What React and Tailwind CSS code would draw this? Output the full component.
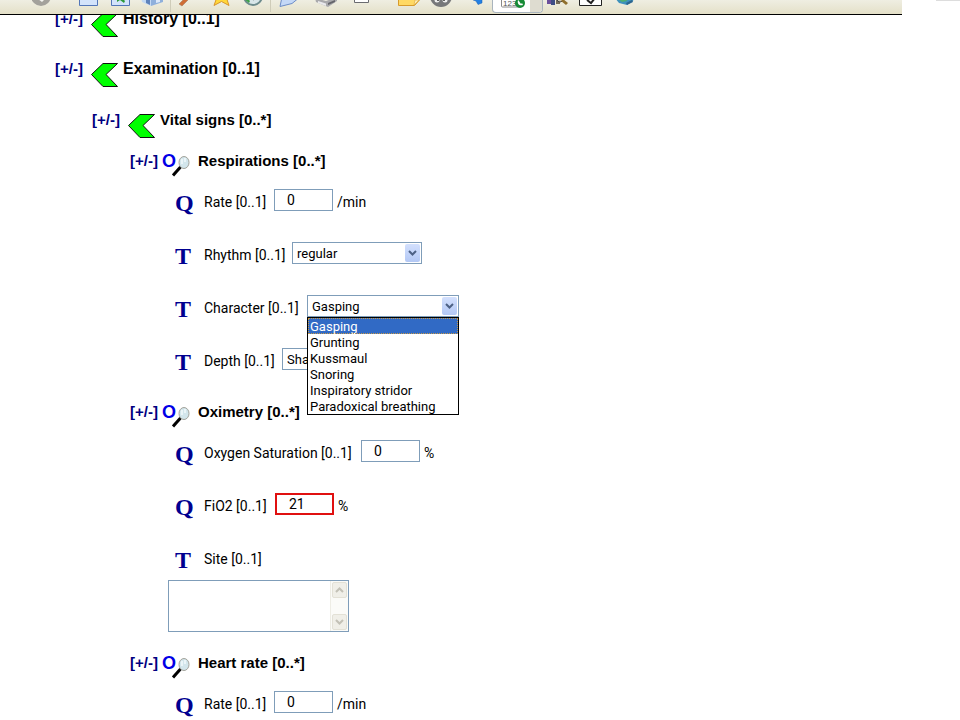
import { useState } from "react";
import clsx from "clsx";

const CHARACTERS = [
  "Gasping",
  "Grunting",
  "Kussmaul",
  "Snoring",
  "Inspiratory stridor",
  "Paradoxical breathing",
];

/* ---------- toolbar ---------- */

const TOOLS = [
  {
    name: "Stop",
    box: "ml-8 w-5",
    art: (
      <>
        <circle cx="9" cy="-4" r="10" fill="#a3a19b" />
        <path d="M6 -1h7l-3 3z" fill="#f4f4f0" />
      </>
    ),
  },
  {
    name: "Page",
    box: "ml-[27px] w-5",
    art: <path d="M.5 -4h18V5.500h-18z" fill="#d3e3fb" stroke="#5376b8" />,
  },
  {
    name: "Refresh",
    box: "ml-3 w-5",
    art: (
      <>
        <path d="M.5 -4h18V5.500h-18z" fill="#d3e3fb" stroke="#5376b8" />
        <path d="M6 -2v4l3-2 4 3 1-2-4-4z" fill="#2c9a3a" />
      </>
    ),
  },
  {
    name: "Home",
    box: "ml-2.5 w-6",
    art: (
      <>
        <path d="M0 -3l10 2v7l-9-4z" fill="#c3d9f4" />
        <path d="M10 -1l12-3v6l-12 4z" fill="#8fb0dc" />
        <path d="M5 -1l4 1v5l-4-2z" fill="#5f83bb" />
        <path d="M15 0l4-1v3l-4 1z" fill="#dce9fa" />
      </>
    ),
  },
  {
    name: "Search",
    divider: true,
    box: "ml-2 w-4",
    art: <path d="M0 4L8 -4l3 2-8 8z" fill="#cf6d35" stroke="#99745b" strokeWidth=".5" />,
  },
  {
    name: "Favorites",
    box: "ml-[18px] w-5",
    art: <path d="M4 -3L1 5.500l7.500-4 7.500 4-2-6 4-4z" fill="#ffd83a" stroke="#d9952b" />,
  },
  {
    name: "History",
    box: "ml-2 w-6",
    art: (
      <>
        <circle cx="12" cy="-4" r="9" fill="#d8e6e9" stroke="#6d8b8d" strokeWidth="2" />
        <path d="M3 -1l5 4 1-2-3-3z" fill="#3c9f47" />
        <path d="M12 -4v4l4-2" fill="none" stroke="#55646b" />
      </>
    ),
  },
  {
    name: "Mail",
    divider: true,
    box: "ml-2 w-6",
    art: <path d="M3 -3L1 6.500l12-3L21 -3z" fill="#c4d8f7" stroke="#6c8cc7" />,
  },
  {
    name: "Print",
    box: "ml-3 w-6",
    art: (
      <>
        <path d="M0 -2l11 3 11-4v4l-9 6L1 2z" fill="#a9a9ac" />
        <path d="M3 1l8 2.500V6L3 3z" fill="#e9e9ec" />
        <path d="M13 3l7-3v2l-7 3z" fill="#65656b" />
      </>
    ),
  },
  {
    name: "Edit",
    box: "ml-[15px] w-4",
    art: <path d="M.5 -4h14V2.500H.5z" fill="#fff" stroke="#6a6b70" />,
  },
  {
    name: "Notes",
    box: "ml-7 w-6",
    art: (
      <>
        <path d="M.5 -4h21V0l-5 5.500H.5z" fill="#ffd964" stroke="#d79b2c" />
        <path d="M16 5l1-5h4z" fill="#fff0b5" stroke="#d79b2c" strokeWidth=".5" />
      </>
    ),
  },
  {
    name: "Messenger",
    box: "ml-2 w-6",
    art: (
      <>
        <circle cx="11" cy="-4" r="11" fill="#77787a" />
        <circle cx="7" cy="0" r="2.500" fill="#eee" />
        <circle cx="15" cy="0" r="2.500" fill="#eee" />
        <circle cx="8" cy="0" r="1" fill="#333" />
        <circle cx="14" cy="0" r="1" fill="#333" />
      </>
    ),
  },
  {
    name: "Bluetooth",
    box: "ml-[18px] w-3",
    art: <path d="M2 -3h8v6L6 4.500 4 1 1 0z" fill="#2380e4" stroke="#165cae" strokeWidth=".5" />,
  },
];

const TOOLS_AFTER = [
  {
    name: "Research",
    box: "ml-[3px] w-6",
    art: (
      <>
        <path d="M1 -3h4v7H1z" fill="#6b4f9b" />
        <path d="M5 -3h4v8H5z" fill="#3e4d86" />
        <path d="M10 0h4v4h-4z" fill="#776d5a" />
        <circle cx="14" cy="-1" r="3" fill="#c8c3ad" stroke="#444" />
        <path d="M15 1l5 4 2-2-5-4z" fill="#8f6f2d" />
      </>
    ),
  },
  {
    name: "Check",
    box: "ml-2 w-6",
    art: (
      <>
        <path d="M1.500 -4h22v9.500H1.500z" fill="#fff" stroke="#222" />
        <path d="M9 0l4 3 4-5" fill="none" stroke="#222" strokeWidth="2" />
      </>
    ),
  },
  {
    name: "Sync",
    box: "ml-3 w-6",
    art: (
      <>
        <path d="M1 -2l4 5 8 2 6-4 1-3z" fill="#3e91bd" />
        <path d="M4 -1l4 3 5-1-1-2z" fill="#4fae72" />
        <path d="M12 3l6-3 1 2-6 3z" fill="#2c658f" />
      </>
    ),
  },
];

function Tool({ name, box, art, divider }) {
  return (
    <>
      {divider && <span className="ml-[5px] h-3 w-px shrink-0 bg-[#cfccb9]" />}
      <button type="button" aria-label={name} className={clsx("h-3 shrink-0", box)}>
        <svg viewBox="0 0 24 12" width="24" height="12">
          {art}
        </svg>
      </button>
    </>
  );
}

function Toolbar() {
  return (
    <header className="flex items-start">
      <div className="flex h-[15px] w-[94%] overflow-hidden border-b border-black bg-gradient-to-b from-[#efeee2] to-[#e4e0c8]">
        {TOOLS.map((t) => (
          <Tool key={t.name} {...t} />
        ))}
        <button
          type="button"
          aria-label="Phone numbers"
          className="ml-2 flex h-[13px] w-[51px] shrink-0 overflow-hidden rounded-b border border-t-0 border-[#a9b4bd] bg-white"
        >
          <svg viewBox="0 0 37 12" width="37" height="12">
            <rect x="8.500" y="-4" width="18" height="11" rx="1" fill="#fff" stroke="#888" />
            <text x="10" y="6" fontSize="8" fontFamily="Liberation Sans" fill="#555">
              123
            </text>
            <circle cx="27" cy="3" r="5" fill="#168a35" />
            <path d="M25 0c-1 4 1 6 5 5l-1-2-1 1-2-3z" fill="#fff" />
          </svg>
          <span className="h-full grow bg-[#dedcd0]" />
        </button>
        {TOOLS_AFTER.map((t) => (
          <Tool key={t.name} {...t} />
        ))}
      </div>
      <span className="ml-auto h-px w-6 bg-[#dddddd]" />
    </header>
  );
}

/* ---------- tree icons ---------- */

function ArrowIcon() {
  return (
    <svg className="ml-2 mt-1 shrink-0" viewBox="0 0 27 24" width="27" height="24">
      <path d="M.5 11.500L12 .5h14.500L15 11.500l11.500 12H12z" fill="#00ff00" stroke="#111" />
    </svg>
  );
}

function ObservationIcon() {
  return (
    <span className="ml-1 flex items-start">
      <span className="text-lg leading-5 font-bold text-[#0000e6]">O</span>
      <svg className="-ml-1 mt-1" viewBox="0 0 18 22" width="18" height="22">
        <path d="M1 20.500L8.500 12" stroke="#000" strokeWidth="3" />
        <ellipse cx="12" cy="7.500" rx="5" ry="6" fill="#d3e6ec" stroke="#a3a39b" />
        <path d="M10 4v5M13 3v4" stroke="#f3fafc" strokeWidth="1.500" />
      </svg>
    </span>
  );
}

function Toggle() {
  return (
    <button type="button" className="w-7 shrink-0 text-[15px] leading-5 font-bold text-[#000080]">
      [+/-]
    </button>
  );
}

function Section({ title, className }) {
  return (
    <div className={clsx("flex items-start", className)}>
      <Toggle />
      <ArrowIcon />
      <h2 className="ml-[5px] font-bold leading-5">{title}</h2>
    </div>
  );
}

function Observation({ title }) {
  return (
    <div className="flex h-[39px] items-start pt-px pl-[130px]">
      <Toggle />
      <ObservationIcon />
      <h3 className="ml-2 text-[15px] leading-5 font-bold">{title}</h3>
    </div>
  );
}

/* ---------- fields ---------- */

function Field({ kind, label, id, labelWidth, className = "h-[53px]", children }) {
  return (
    <div className={clsx("flex items-start pl-[175px]", className)}>
      <span className="w-[29px] shrink-0 font-['Liberation_Serif',serif] text-2xl leading-7 font-bold text-[#000090]">
        {kind}
      </span>
      <label
        htmlFor={id}
        className={clsx("mt-[3px] mr-1 shrink-0 font-['Roboto',sans-serif] text-sm leading-5 whitespace-nowrap", labelWidth)}
      >
        {label}
      </label>
      {children}
    </div>
  );
}

function Quantity({ id, label, labelWidth, unit, initial, invalid }) {
  const [value, setValue] = useState(initial);

  return (
    <Field kind="Q" id={id} label={label} labelWidth={labelWidth}>
      <input
        id={id}
        type="text"
        value={value}
        onChange={(e) => setValue(e.target.value)}
        className={clsx(
          "h-[22px] w-[59px] bg-white pl-3 font-['Roboto',sans-serif] text-sm leading-5 outline-none",
          invalid ? "border-2 border-[#e01010]" : "border border-[#7f9db9]"
        )}
      />
      <span className="mt-[3px] ml-1 font-['Roboto',sans-serif] text-sm leading-5">{unit}</span>
    </Field>
  );
}

function Choice({ id, label, labelWidth, width, options, open }) {
  const [value, setValue] = useState(options[0]);

  return (
    <Field kind="T" id={id} label={label} labelWidth={labelWidth}>
      <div className={clsx("relative", width)}>
        <select
          id={id}
          value={value}
          onChange={(e) => setValue(e.target.value)}
          className="block h-[22px] w-full appearance-none border border-[#7f9db9] bg-white pt-px pl-1 font-['Roboto',sans-serif] text-[13px] leading-5 outline-none"
        >
          {options.map((o) => (
            <option key={o}>{o}</option>
          ))}
        </select>
        <span className="pointer-events-none absolute top-0.5 right-0.5 flex h-[18px] w-[15px] items-center justify-center rounded-xs bg-gradient-to-b from-[#d3e0fd] to-[#b3c8f5]">
          <svg viewBox="0 0 9 6" width="9" height="6">
            <path d="M1 1l3.500 3.500L8 1" fill="none" stroke="#4d6185" strokeWidth="2" />
          </svg>
        </span>
        {open && (
          <ul
            role="listbox"
            aria-label={label}
            className="absolute top-full left-0 z-10 w-full border border-black bg-white font-['Roboto',sans-serif] text-[13px] leading-[18px]"
          >
            {options.map((o) => (
              <li
                key={o}
                role="option"
                aria-selected={o === value}
                onClick={() => setValue(o)}
                className={clsx(
                  "h-4 pl-0.5 whitespace-nowrap",
                  o === value && "bg-[#316ac5] text-white outline-1 -outline-offset-1 outline-dotted outline-[#c79a4a]"
                )}
              >
                {o}
              </li>
            ))}
          </ul>
        )}
      </div>
    </Field>
  );
}

function ScrollArrow({ d }) {
  return (
    <span className="flex h-4 w-full items-center justify-center rounded-xs border border-[#e3e1d6] bg-[#f0efe8]">
      <svg viewBox="0 0 9 6" width="9" height="6">
        <path d={d} fill="none" stroke="#c3c1b6" strokeWidth="2" />
      </svg>
    </span>
  );
}

function SiteField() {
  const [site, setSite] = useState("");

  return (
    <>
      <Field kind="T" id="site" label="Site [0..1]" className="h-[34px]" />
      <div className="mb-5 ml-[168px] flex h-[52px] w-[181px] border border-[#7f9db9]">
        <textarea
          id="site"
          value={site}
          onChange={(e) => setSite(e.target.value)}
          className="h-full min-w-0 grow resize-none bg-white px-1 text-sm outline-none"
        />
        <div className="flex w-[18px] shrink-0 flex-col justify-between border-l border-[#eeede5] bg-[#fbfbf8] p-px">
          <ScrollArrow d="M1 5l3.500-3.500L8 5" />
          <ScrollArrow d="M1 1l3.500 3.500L8 1" />
        </div>
      </div>
    </>
  );
}

export default function App() {
  return (
    <div className="min-h-screen bg-white font-['Liberation_Sans',sans-serif] text-black">
      <Toolbar />
      <main className="overflow-hidden">
        <Section title="History [0..1]" className="-mt-1.5 h-[50px] pl-[55px] text-base" />
        <Section title="Examination [0..1]" className="h-[51px] pl-[55px] text-base" />
        <Section title="Vital signs [0..*]" className="h-10 pl-[92px] text-[15px]" />

        <Observation title="Respirations [0..*]" />
        <Quantity id="resp-rate" label="Rate [0..1]" labelWidth="w-[66px]" unit="/min" initial="0" />
        <Choice
          id="rhythm"
          label="Rhythm [0..1]"
          labelWidth="w-[84px]"
          width="w-[130px]"
          options={["regular", "irregular"]}
        />
        <Choice
          id="character"
          label="Character [0..1]"
          labelWidth="w-[99px]"
          width="w-[152px]"
          options={CHARACTERS}
          open
        />
        <Choice
          id="depth"
          label="Depth [0..1]"
          labelWidth="w-[74px]"
          width="w-[90px]"
          options={["Shallow", "Normal", "Deep"]}
        />

        <Observation title="Oximetry [0..*]" />
        <Quantity id="spo2" label="Oxygen Saturation [0..1]" labelWidth="w-[153px]" unit="%" initial="0" />
        <Quantity id="fio2" label="FiO2 [0..1]" labelWidth="w-[67px]" unit="%" initial="21" invalid />
        <SiteField />

        <Observation title="Heart rate [0..*]" />
        <Quantity id="heart-rate" label="Rate [0..1]" labelWidth="w-[66px]" unit="/min" initial="0" />
      </main>
    </div>
  );
}
